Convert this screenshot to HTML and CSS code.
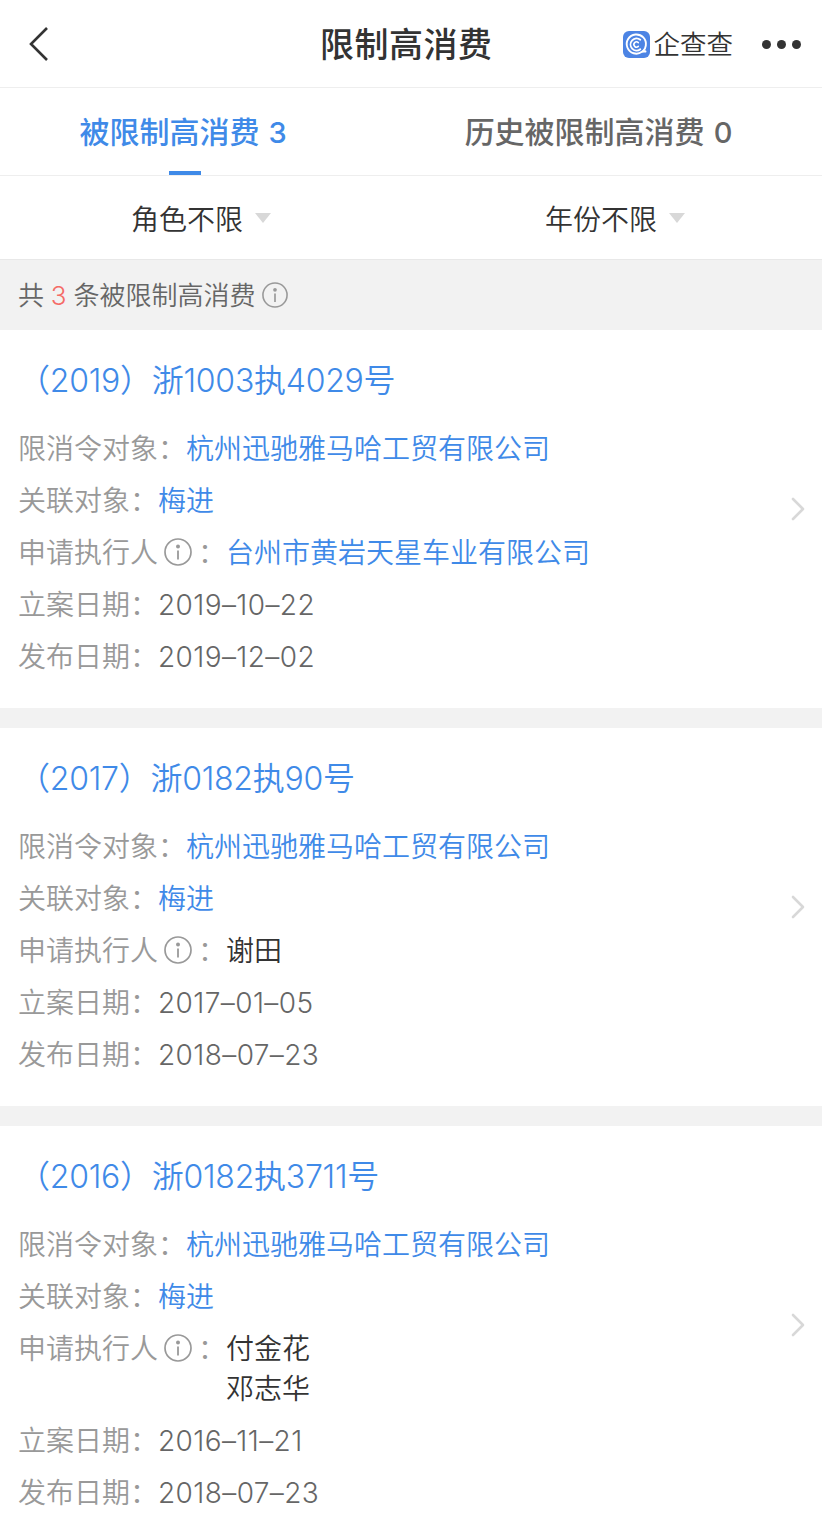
FILE: index.html
```html
<!DOCTYPE html>
<html lang="zh-CN">
<head>
    <meta charset="UTF-8">
    <meta name="viewport" content="width=device-width, initial-scale=1.0">
    <link rel="stylesheet" href="styles.css">
    <title>限制高消费</title>
</head>
<body>
    <svg class="defs" width="0" height="0">
        <symbol id="info" viewBox="0 0 28 28">
            <circle cx="14" cy="14" r="13" fill="none" stroke="currentColor" stroke-width="1.7"/>
            <circle cx="14" cy="8.4" r="2" fill="currentColor"/>
            <path d="M14 12.5v9" stroke="currentColor" stroke-width="1.8"/>
        </symbol>
        <symbol id="arrow" viewBox="0 0 16 24">
            <path d="M3 2l10 10L3 22" fill="none" stroke="currentColor" stroke-width="2.6" stroke-linecap="round" stroke-linejoin="round"/>
        </symbol>
    </svg>

    <header class="header">
        <svg class="back" width="22" height="36" viewBox="0 0 22 36">
            <path d="M20 2L4 18l16 16" fill="none" stroke="currentColor" stroke-width="2.6"/>
        </svg>
        <h1>限制高消费</h1>
        <div class="brand">
            <svg width="27" height="27" viewBox="0 0 27 27">
                <rect width="27" height="27" rx="6" fill="#4c84e4"/>
                <g fill="none" stroke="#fff" stroke-linecap="round">
                    <path d="M19 20.8A9.6 9.6 0 1 1 22.8 14.6Q22.4 18 20 20.2" stroke-width="1.9"/>
                    <path d="M17.3 18.2A6 6 0 1 1 17.3 8.8" stroke-width="1.8"/>
                    <path d="M15.3 15.4A2.6 2.6 0 1 1 15.3 11.6" stroke-width="1.6"/>
                    <path d="M19.8 20.4h2.4" stroke-width="2.4"/>
                </g>
            </svg>
            <span>企查查</span>
        </div>
        <div class="more"><i></i><i></i><i></i></div>
    </header>

    <nav class="tabs">
        <div class="tab active">被限制高消费 <b>3</b></div>
        <div class="tab">历史被限制高消费 <b>0</b></div>
    </nav>

    <div class="filters">
        <div class="filter">角色不限<i class="caret"></i></div>
        <div class="filter">年份不限<i class="caret"></i></div>
    </div>

    <div class="count">
        <span>共 <em>3</em> 条被限制高消费</span>
        <svg class="info"><use href="#info"/></svg>
    </div>

    <main>
        <section class="item">
            <h2>（2019）浙1003执4029号</h2>
            <div class="row"><label>限消令对象：</label><a>杭州迅驰雅马哈工贸有限公司</a></div>
            <div class="row"><label>关联对象：</label><a>梅进</a></div>
            <div class="row"><label>申请执行人<svg class="info"><use href="#info"/></svg>：</label><a>台州市黄岩天星车业有限公司</a></div>
            <div class="row"><label>立案日期：</label><span class="date">2019–10–22</span></div>
            <div class="row"><label>发布日期：</label><span class="date">2019–12–02</span></div>
            <svg class="arrow"><use href="#arrow"/></svg>
        </section>

        <section class="item">
            <h2>（2017）浙0182执90号</h2>
            <div class="row"><label>限消令对象：</label><a>杭州迅驰雅马哈工贸有限公司</a></div>
            <div class="row"><label>关联对象：</label><a>梅进</a></div>
            <div class="row"><label>申请执行人<svg class="info"><use href="#info"/></svg>：</label><span class="name">谢田</span></div>
            <div class="row"><label>立案日期：</label><span class="date">2017–01–05</span></div>
            <div class="row"><label>发布日期：</label><span class="date">2018–07–23</span></div>
            <svg class="arrow"><use href="#arrow"/></svg>
        </section>

        <section class="item">
            <h2>（2016）浙0182执3711号</h2>
            <div class="row"><label>限消令对象：</label><a>杭州迅驰雅马哈工贸有限公司</a></div>
            <div class="row"><label>关联对象：</label><a>梅进</a></div>
            <div class="row"><label>申请执行人<svg class="info"><use href="#info"/></svg>：</label><span class="name">付金花<br>邓志华</span></div>
            <div class="row"><label>立案日期：</label><span class="date">2016–11–21</span></div>
            <div class="row"><label>发布日期：</label><span class="date">2018–07–23</span></div>
            <svg class="arrow"><use href="#arrow"/></svg>
        </section>
    </main>
</body>
</html>
```
FILE: styles.css
```css
* {
    box-sizing: border-box;
}

body {
    margin: 0;
    height: 100vh;
    overflow: hidden;
    background-color: #fff;
    color: #333;
    font-family: Inter, "Noto Sans CJK SC", sans-serif;
    font-size: 28px;
    font-weight: 350;
}

h1,
h2 {
    margin: 0;
}

.defs {
    display: block;
}

/* Header */
.header {
    display: grid;
    grid-template-columns: 320px 172px 1fr auto;
    align-items: center;
    height: 88px;
    padding-right: 21px;
    border-bottom: 1px solid #eee;
}

.back {
    margin-left: 27px;
}

h1 {
    padding-top: 2px;
    font-size: 34px;
    font-weight: 500;
    line-height: 48px;
    letter-spacing: 0.5px;
    white-space: nowrap;
}

.brand {
    display: flex;
    align-items: center;
    justify-content: flex-end;
    gap: 4px;
    margin-right: 29px;
    padding-top: 1px;
    font-size: 26.5px;
    line-height: 40px;
}

.more {
    display: flex;
    gap: 6px;
    padding-top: 1px;
}

.more i {
    width: 9px;
    height: 9px;
    border-radius: 50%;
    background-color: #333;
}

/* Tabs */
.tabs {
    display: grid;
    grid-template-columns: 370px 1fr;
    height: 88px;
    border-bottom: 1px solid #eee;
}

.tab {
    position: relative;
    padding-top: 22px;
    font-size: 30px;
    font-weight: 500;
    line-height: 44px;
    text-align: center;
    color: #666;
}

.tab b {
    margin-left: 1px;
    font-size: 29px;
    font-weight: 500;
}

.tab:first-child {
    padding-right: 4px;
}

.tab:last-child {
    padding-left: 5px;
}

.tab.active {
    color: #3f8ae8;
}

.tab.active::after {
    content: "";
    position: absolute;
    bottom: 0;
    left: 169px;
    width: 32px;
    height: 4px;
    background-color: #3f8ae8;
}

/* Filters */
.filters {
    display: grid;
    grid-template-columns: 402px 1fr;
    height: 84px;
    border-bottom: 1px solid #e8e8e8;
}

.filter {
    display: flex;
    align-items: center;
    justify-content: center;
    gap: 12px;
}

.filter:last-child {
    padding-left: 6px;
}

.caret {
    border: 8px solid transparent;
    border-top: 10px solid #d8d8d8;
    border-bottom: 0;
}

/* Count bar */
.count {
    display: flex;
    align-items: center;
    gap: 7px;
    height: 70px;
    padding-left: 18px;
    background-color: #f2f2f2;
    color: #666;
    font-size: 26px;
}

.count span {
    padding-bottom: 3px;
    word-spacing: -0.5px;
}

.count em {
    color: #f56b67;
    font-style: normal;
}

.info {
    width: 28px;
    height: 28px;
    color: #999;
}

.count .info {
    width: 26px;
    height: 26px;
}

/* List */
.item {
    position: relative;
    padding: 29px 18px 31px;
}

.item + .item {
    border-top: 20px solid #f2f2f2;
}

h2 {
    margin-bottom: 26px;
    color: #3f8ae8;
    font-size: 32px;
    font-weight: 350;
    line-height: 44px;
    letter-spacing: -0.25px;
}

.row {
    display: flex;
    margin-bottom: 12px;
    color: #666;
    line-height: 40px;
}

.row:nth-last-child(2) {
    margin-bottom: 0;
}

.row label {
    display: flex;
    height: 40px;
    color: #999;
}

.row .info {
    margin: 5px 6px 0;
}

.row a {
    color: #3f8ae8;
}

.row .name {
    color: #333;
}

.row .date {
    letter-spacing: 0.4px;
}

.arrow {
    position: absolute;
    top: calc(50% - 22px);
    right: 16px;
    width: 16px;
    height: 24px;
    color: #d8d8d8;
}
```
